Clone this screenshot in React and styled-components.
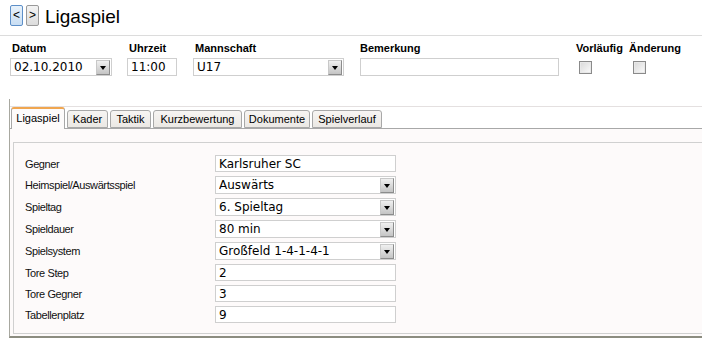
import React from "react";
import styled, { createGlobalStyle } from "styled-components";

const Global = createGlobalStyle`
  html, body { margin: 0; padding: 0; background: #fff; overflow: hidden; }
  body { font-family: "Liberation Sans", Arial, sans-serif; color: #000; }
`;

const Page = styled.div`
  width: 702px;
  height: 350px;
  position: relative;
  overflow: hidden;
`;

const TitleRow = styled.div`
  height: 35px;
  box-sizing: border-box;
  padding: 5px 0 0 10px;
  display: flex;
  align-items: flex-start;
`;

const NavButton = styled.button`
  width: 13px;
  height: 21px;
  margin: 0 3px 0 0;
  padding: 0;
  box-sizing: border-box;
  border: 1px solid ${(p) => (p.$focus ? "#5d8fc8" : "#9a9a9a")};
  border-radius: 2px;
  background: ${(p) =>
    p.$focus
      ? "linear-gradient(#e8f2fb, #c9def3)"
      : "linear-gradient(#f4f4f4, #dcdcdc)"};
  font-family: "Liberation Sans", Arial, sans-serif;
  font-size: 12px;
  line-height: 19px;
  color: #000;
`;

const Title = styled.h1`
  margin: 1px 0 0 3px;
  font-family: "Liberation Sans", Arial, sans-serif;
  font-weight: normal;
  font-size: 19px;
  line-height: 21px;
`;

const Header = styled.div`
  border-top: 1px solid #dcdcdc;
  height: 64px;
  box-sizing: border-box;
  padding: 5px 0 0 10px;
  display: grid;
  grid-template-columns: 117px 66px 167px 216px 53px 60px;
  grid-template-rows: 14px 18px;
  row-gap: 3px;
`;

const HeadLabel = styled.div`
  font-weight: bold;
  font-size: 11px;
  line-height: 14px;
  padding-left: ${(p) => p.$indent ?? 2}px;
  white-space: nowrap;
`;

const Cell = styled.div`
  display: flex;
  align-items: center;
  padding-left: ${(p) => p.$indent ?? 0}px;
`;

const Field = styled.div`
  box-sizing: border-box;
  width: ${(p) => p.$w}px;
  height: ${(p) => p.$h ?? 18}px;
  border: 1px solid #cfcfcf;
  background: #fff;
  display: flex;
  align-items: center;
  padding: 0 1px 0 3px;
  font-family: "DejaVu Sans", Verdana, sans-serif;
  font-size: 12px;
  color: #000;
  white-space: nowrap;
`;

const Value = styled.span`
  flex: 1;
  overflow: hidden;
`;

const DropButton = styled.span`
  box-sizing: border-box;
  width: 14px;
  height: 15px;
  border: 1px solid #8c8c8c;
  border-top-color: #c8c8c8;
  border-left-color: #c8c8c8;
  background: linear-gradient(#f0f0f0, #c4c4c4);
  display: flex;
  align-items: center;
  justify-content: center;
  &::after {
    content: "";
    border-left: 3px solid transparent;
    border-right: 3px solid transparent;
    border-top: 4px solid #000;
    margin-top: 1px;
  }
`;

const Check = styled.span`
  box-sizing: border-box;
  width: 13px;
  height: 13px;
  border: 1px solid #8a8a8a;
  background: linear-gradient(135deg, #d8d8d8, #fbfbfb);
  box-shadow: inset 0 0 0 1px #e8e8e8;
`;

const Frame = styled.div`
  margin-left: 9px;
  width: 720px;
  border-left: 1px solid #a8a8a0;
  border-bottom: 2px solid #8c8c80;
  box-sizing: border-box;
  padding-top: 7px;
`;

const TabStrip = styled.div`
  display: flex;
  align-items: flex-end;
  gap: 2px;
  height: 21px;
  padding-left: 1px;
  border-top: 1px solid #e4e0e0;
  border-bottom: 1px solid #a8a8a8;
  background: #fff;
`;

const Tab = styled.div`
  box-sizing: border-box;
  width: ${(p) => p.$w}px;
  height: ${(p) => (p.$active ? 22 : 18)}px;
  margin-bottom: ${(p) => (p.$active ? -1 : 0)}px;
  border: 1px solid #a8a8a8;
  border-bottom: ${(p) => (p.$active ? "none" : "1px solid #a8a8a8")};
  border-top: ${(p) => (p.$active ? "2px solid #f0a650" : "1px solid #a8a8a8")};
  border-radius: 3px 3px 0 0;
  background: ${(p) => (p.$active ? "#fdfbfb" : "linear-gradient(#f7f5f3, #ebe8e4)")};
  font-size: 11px;
  line-height: ${(p) => (p.$active ? 18 : 16)}px;
  text-align: center;
  color: #000;
  white-space: nowrap;
`;

const Panel = styled.div`
  background: #fdfafa;
  padding: 13px 0 2px 3px;
`;

const Inner = styled.div`
  border: 1px solid #d0d0d0;
  border-right: none;
  padding: 12px 0 10px 11px;
  display: flex;
  flex-direction: column;
  gap: 4px;
`;

const Row = styled.div`
  display: flex;
  align-items: center;
`;

const RowLabel = styled.div`
  width: 190px;
  font-size: 11px;
  letter-spacing: -0.4px;
  color: #111;
`;

const header = [
  { label: "Datum" },
  { label: "Uhrzeit" },
  { label: "Mannschaft" },
  { label: "Bemerkung", indent: 0 },
  { label: "Vorläufig", indent: 0 },
  { label: "Änderung", indent: 0 },
];

const tabs = [
  { name: "Ligaspiel", w: 54, active: true },
  { name: "Kader", w: 41 },
  { name: "Taktik", w: 41 },
  { name: "Kurzbewertung", w: 89 },
  { name: "Dokumente", w: 66 },
  { name: "Spielverlauf", w: 70 },
];

const rows = [
  { label: "Gegner", value: "Karlsruher SC" },
  { label: "Heimspiel/Auswärtsspiel", value: "Auswärts", select: true },
  { label: "Spieltag", value: "6. Spieltag", select: true },
  { label: "Spieldauer", value: "80 min", select: true },
  { label: "Spielsystem", value: "Großfeld 1-4-1-4-1", select: true },
  { label: "Tore Step", value: "2" },
  { label: "Tore Gegner", value: "3" },
  { label: "Tabellenplatz", value: "9" },
];

export default function App() {
  return (
    <Page>
      <Global />
      <TitleRow>
        <NavButton $focus>&lt;</NavButton>
        <NavButton>&gt;</NavButton>
        <Title>Ligaspiel</Title>
      </TitleRow>
      <Header>
        {header.map((h) => (
          <HeadLabel key={h.label} $indent={h.indent}>
            {h.label}
          </HeadLabel>
        ))}
        <Cell>
          <Field $w={102}>
            <Value>02.10.2010</Value>
            <DropButton />
          </Field>
        </Cell>
        <Cell>
          <Field $w={50}>
            <Value>11:00</Value>
          </Field>
        </Cell>
        <Cell>
          <Field $w={151}>
            <Value>U17</Value>
            <DropButton />
          </Field>
        </Cell>
        <Cell>
          <Field $w={199} />
        </Cell>
        <Cell $indent={3}>
          <Check />
        </Cell>
        <Cell $indent={4}>
          <Check />
        </Cell>
      </Header>
      <Frame>
        <TabStrip>
          {tabs.map((t) => (
            <Tab key={t.name} $w={t.w} $active={t.active}>
              {t.name}
            </Tab>
          ))}
        </TabStrip>
        <Panel>
          <Inner>
            {rows.map((r) => (
              <Row key={r.label}>
                <RowLabel>{r.label}</RowLabel>
                <Field $w={181} $h={r.select ? 18 : 17}>
                  <Value>{r.value}</Value>
                  {r.select && <DropButton />}
                </Field>
              </Row>
            ))}
          </Inner>
        </Panel>
      </Frame>
    </Page>
  );
}
